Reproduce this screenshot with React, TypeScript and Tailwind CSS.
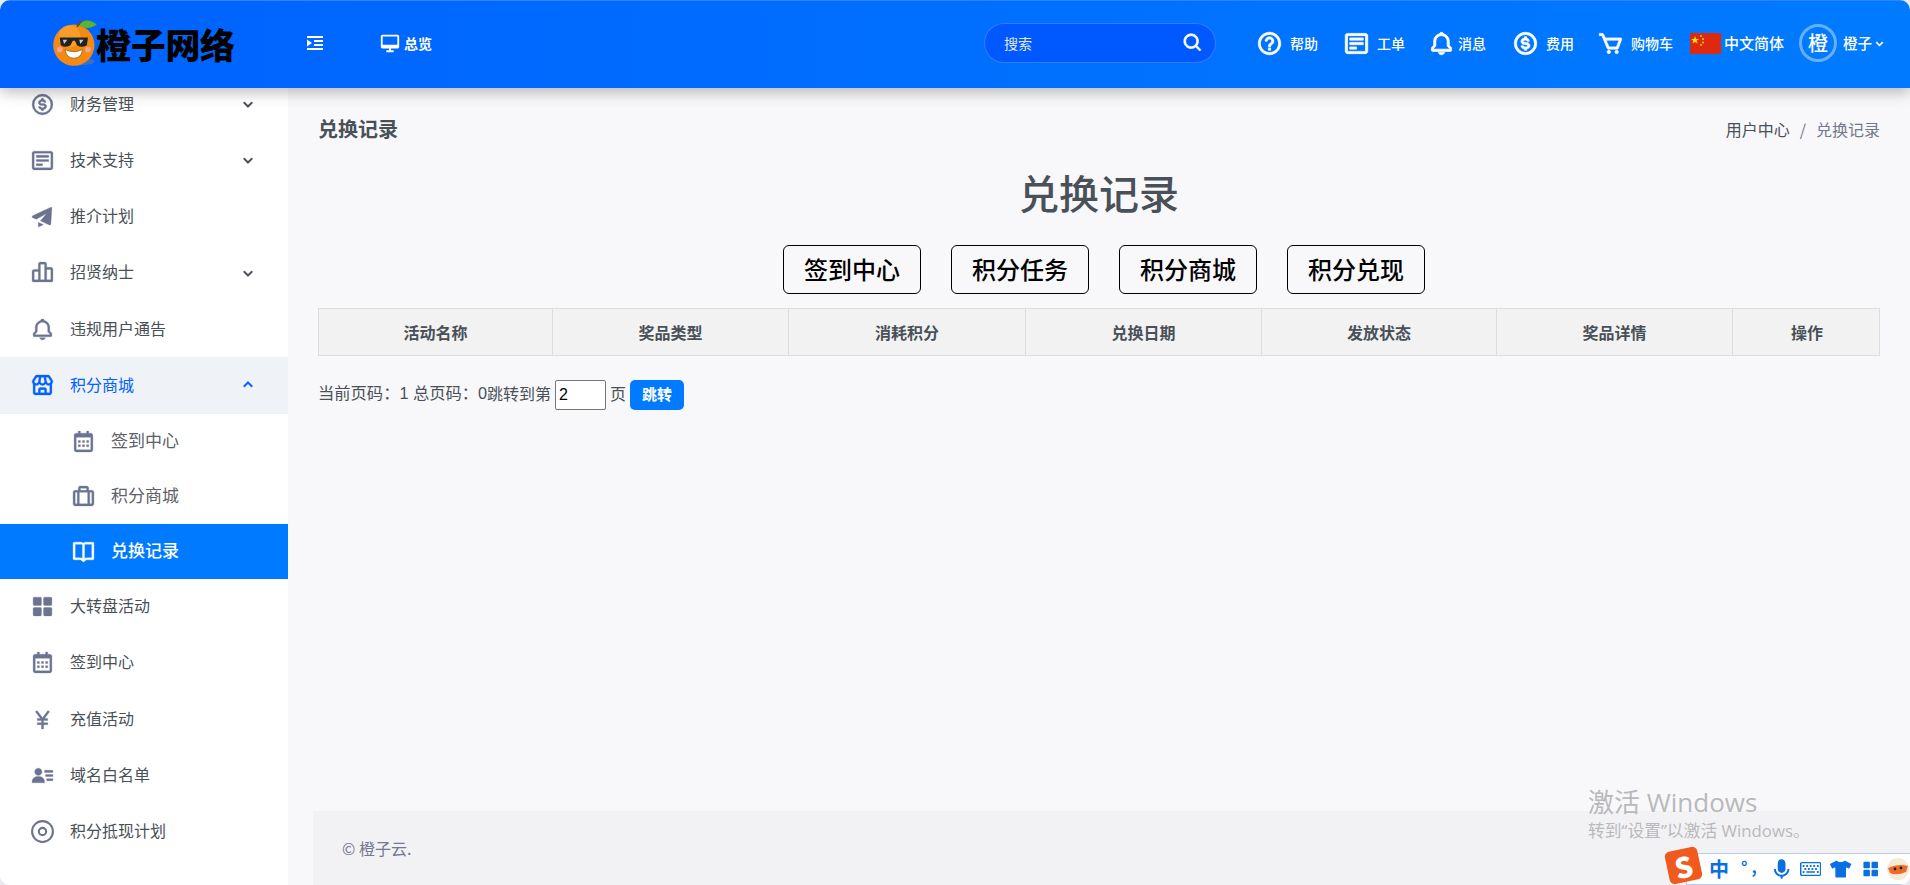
import React from "react";
import {
  BiDollarCircle, BiDetail, BiSolidPaperPlane, BiBarChartAlt2, BiBell, BiStore, BiCalendar, BiBriefcaseAlt,
  BiBookOpen, BiSolidGridAlt, BiYen, BiSolidUserDetail, BiChevronDown, BiChevronUp,
  BiDesktop, BiSearch, BiHelpCircle, BiCart, BiSolidMicrophone,
} from "react-icons/bi";
import { FaTshirt, FaRegKeyboard } from "react-icons/fa";

type IconT = React.ComponentType<{ className?: string }>;
type Row = { label: string; icon: IconT; chev?: "down" | "up"; active?: boolean };

function Ring({ className }: { className?: string }) {
  return (
    <svg viewBox="0 0 24 24" fill="none" stroke="currentColor" className={className}>
      <circle cx="12" cy="12" r="10" strokeWidth="2" />
      <circle cx="12" cy="12" r="3.5" strokeWidth="2" />
    </svg>
  );
}

const before: Row[] = [
  { label: "财务管理", icon: BiDollarCircle, chev: "down" },
  { label: "技术支持", icon: BiDetail, chev: "down" },
  { label: "推介计划", icon: BiSolidPaperPlane },
  { label: "招贤纳士", icon: BiBarChartAlt2, chev: "down" },
  { label: "违规用户通告", icon: BiBell },
  { label: "积分商城", icon: BiStore, chev: "up", active: true },
];
const subs: Row[] = [
  { label: "签到中心", icon: BiCalendar },
  { label: "积分商城", icon: BiBriefcaseAlt },
  { label: "兑换记录", icon: BiBookOpen, active: true },
];
const after: Row[] = [
  { label: "大转盘活动", icon: BiSolidGridAlt },
  { label: "签到中心", icon: BiCalendar },
  { label: "充值活动", icon: BiYen },
  { label: "域名白名单", icon: BiSolidUserDetail },
  { label: "积分抵现计划", icon: Ring },
];
const cols = ["活动名称", "奖品类型", "消耗积分", "兑换日期", "发放状态", "奖品详情", "操作"];
const tabs = ["签到中心", "积分任务", "积分商城", "积分兑现"];

function MainRow({ r }: { r: Row }) {
  const I = r.icon;
  return (
    <div className={`flex h-[56.25px] items-center pl-[30px] pr-[30px] ${r.active ? "bg-[#eff2f7] text-[#0062ff]" : "text-[#495057]"}`}>
      <I className={`h-[25px] w-[25px] [stroke-width:0.3px] ${r.active ? "text-[#0062ff]" : "text-[#6b7390]"}`} />
      <span className="ml-[15px] flex-1 pb-[3px] text-[16px]">{r.label}</span>
      {r.chev === "down" && <BiChevronDown className="h-[20px] w-[20px] [stroke-width:0.4px]" />}
      {r.chev === "up" && <BiChevronUp className="h-[20px] w-[20px] [stroke-width:0.4px]" />}
    </div>
  );
}

function SubRow({ r }: { r: Row }) {
  const I = r.icon;
  return (
    <div className={`flex h-[55px] items-center pl-[71px] ${r.active ? "bg-[#007bff] font-medium text-white" : "text-[#5c6166]"}`}>
      <I className={`h-[25px] w-[25px] [stroke-width:0.3px] ${r.active ? "text-white" : "text-[#6b7390]"}`} />
      <span className="ml-[15px] pb-[2px] text-[17px]">{r.label}</span>
    </div>
  );
}

function Orange() {
  return (
    <svg width="50" height="50" viewBox="0 0 46 46" className="shrink-0">
      <ellipse cx="26" cy="40" rx="14" ry="3.5" fill="#3f6fc4" />
      <circle cx="21" cy="25" r="19" fill="#f58a12" />
      <circle cx="17" cy="17" r="10" fill="#fa9c2a" />
      <path d="M26 7 C29 1 36 1 42 6 C37 10 31 10 26 7Z" fill="#58b52e" />
      <path d="M24 8 L28 2" stroke="#7b4a12" strokeWidth="1.5" />
      <path d="M8 18 H34 L33 25 Q28 28 24 25 L22 21 H20 L18 25 Q13 28 9 25Z" fill="#222" />
      <path d="M11 20 L15 20 L12 24Z M26 20 L30 20 L27 24Z" fill="#ccc" />
      <circle cx="8" cy="29" r="2.6" fill="#f7a3a0" />
      <circle cx="34" cy="29" r="2.6" fill="#f7a3a0" />
      <path d="M13 29 Q21 33 29 29 Q28 37 21 37 Q14 37 13 29Z" fill="#fff" stroke="#7b4a12" strokeWidth="0.6" />
    </svg>
  );
}

function Indent() {
  return (
    <svg width="18" height="18" viewBox="0 0 18 18" fill="#fff">
      <rect x="1" y="2" width="16" height="2" />
      <rect x="8" y="6" width="9" height="2" />
      <rect x="8" y="10" width="9" height="2" />
      <rect x="1" y="14" width="16" height="2" />
      <path d="M1 5.5 L6 9 L1 12.5Z" />
    </svg>
  );
}

function Flag() {
  return (
    <svg width="31" height="21" viewBox="0 0 31 21" className="shrink-0">
      <rect width="31" height="21" fill="#de2910" />
      <path d="M5 3 L6 6 L9 6 L6.7 7.8 L7.6 10.6 L5 9 L2.4 10.6 L3.3 7.8 L1 6 L4 6Z" fill="#ffde00" />
      <circle cx="11" cy="3" r="0.9" fill="#ffde00" />
      <circle cx="13" cy="6" r="0.9" fill="#ffde00" />
      <circle cx="13" cy="9.5" r="0.9" fill="#ffde00" />
      <circle cx="11" cy="12" r="0.9" fill="#ffde00" />
    </svg>
  );
}

function Tool({ icon: I, label, w, gap = "ml-[7px]" }: { icon: IconT; label: string; w: string; gap?: string }) {
  return (
    <div className={`flex items-center ${w}`}>
      <I className="h-[27px] w-[27px] shrink-0 text-white [stroke-width:0.6px]" />
      <span className={`${gap} whitespace-nowrap text-[14px] font-medium`}>{label}</span>
    </div>
  );
}

export default function App() {
  return (
    <div className="h-[885px] w-[1910px] overflow-hidden bg-[#e9e9ee]" style={{ fontFamily: '"Noto Sans CJK SC", "Liberation Sans", sans-serif' }}>
      <div className="relative flex h-full w-full flex-col overflow-hidden rounded-[10px] bg-[#f8f8fb]">
        <header className="relative z-10 flex h-[88px] shrink-0 items-center border-t border-[#2b86ff] bg-gradient-to-r from-[#0062ff] to-[#007bff] pb-[3px] text-white shadow-[0_4px_14px_rgba(0,0,0,0.28)]">
          <div className="ml-[51px] flex w-[255px] items-center">
            <Orange />
            <span className="-ml-[5px] text-[35px] leading-none font-black tracking-[-0.3px] whitespace-nowrap text-black">橙子网络</span>
          </div>
          <Indent />
          <div className="ml-[55px] flex items-center">
            <BiDesktop className="h-[22px] w-[22px]" />
            <span className="ml-[3px] text-[14px] font-bold">总览</span>
          </div>
          <div className="ml-[552px] flex h-[40px] w-[232px] items-center justify-between rounded-full border border-white/20 bg-[#0059ff] pr-[11px] pl-[19px]">
            <span className="text-[14px] text-[#e3e6ec]">搜索</span>
            <BiSearch className="h-[22px] w-[22px] [stroke-width:0.8px]" />
          </div>
          <div className="ml-[40px] flex items-center">
            <Tool icon={BiHelpCircle} label="帮助" w="w-[87px]" />
            <Tool icon={BiDetail} label="工单" w="w-[85px]" />
            <Tool icon={BiBell} label="消息" w="w-[84px]" gap="ml-[3px]" />
            <Tool icon={BiDollarCircle} label="费用" w="w-[85px]" />
            <Tool icon={BiCart} label="购物车" w="w-[93px]" />
            <Flag />
            <span className="ml-[3px] text-[15px] font-medium whitespace-nowrap">中文简体</span>
            <div className="ml-[15px] flex h-[38px] w-[38px] items-center justify-center rounded-full border-[3px] border-white/40 text-[20px] font-medium">橙</div>
            <span className="ml-[6px] text-[14.5px] font-medium">橙子</span>
            <BiChevronDown className="h-[15px] w-[15px] [stroke-width:0.8px]" />
          </div>
        </header>

        <div className="flex min-h-0 flex-1">
          <aside className="w-[288px] shrink-0 overflow-hidden bg-white">
            <div className="-mt-[12px]">
              {before.map((r) => <MainRow key={r.label} r={r} />)}
              {subs.map((r) => <SubRow key={r.label} r={r} />)}
              {after.map((r) => <MainRow key={r.label} r={r} />)}
            </div>
          </aside>

          <main className="flex min-w-0 flex-1 flex-col">
            <div className="flex-1 px-[30px] pt-[28px] text-[#495057]">
              <div className="flex items-center justify-between">
                <h4 className="text-[20px] leading-[26px] font-bold">兑换记录</h4>
                <div className="flex items-center text-[16px] leading-[26px]">
                  <span>用户中心</span>
                  <span className="mx-[10px] text-[#74788d]">/</span>
                  <span className="text-[#74788d]">兑换记录</span>
                </div>
              </div>
              <h1 className="mt-[24px] text-center text-[40px] leading-[52px] font-medium">兑换记录</h1>
              <div className="mt-[27px] flex justify-center gap-[30px] pl-[10px]">
                {tabs.map((t) => (
                  <button key={t} className="h-[49px] w-[138px] rounded-[6px] border border-black pb-[2px] text-[24px] font-medium text-black">{t}</button>
                ))}
              </div>
              <div className="mt-[14px] grid h-[48px] grid-cols-[234px_236px_237px_236px_235px_236px_148px] border border-[#dddddd] bg-[#f2f2f2]">
                {cols.map((c, i) => (
                  <div key={c} className={`flex items-center justify-center text-[16px] font-bold ${i < 6 ? "border-r border-[#dddddd]" : ""}`}>{c}</div>
                ))}
              </div>
              <div className="mt-[24px] flex items-center text-[16px]" style={{ fontFamily: '"Liberation Sans", "Noto Sans CJK SC", sans-serif' }}>
                <span className="-mt-[4px] w-[169px] text-[16.3px] whitespace-nowrap">当前页码：1 总页码：0</span>
                <span>跳转到第</span>
                <input defaultValue="2" className="mx-[4px] h-[30px] w-[51px] rounded-[2px] border border-[#767676] bg-white px-[3px] text-[16px] text-black" />
                <span>页</span>
                <button className="ml-[4px] h-[30px] w-[54px] rounded-[5px] bg-[#007bff] text-[15px] font-bold text-white">跳转</button>
              </div>
            </div>
            <footer className="ml-[25px] flex h-[74px] shrink-0 items-center bg-[#f2f2f5] pl-[29px] text-[16px] text-[#74788d]">© 橙子云.</footer>
          </main>
        </div>

        <div className="pointer-events-none absolute top-[785px] left-[1588px] text-[#b9b9bc]" style={{ fontFamily: '"Open Sans", "Noto Sans CJK SC", sans-serif' }}>
          <div className="text-[26px] leading-[34px]">激活 Windows</div>
          <div className="text-[16.8px] leading-[24px]">转到“设置”以激活 Windows。</div>
        </div>

        <div className="absolute right-0 bottom-0 flex h-[32px] w-[224px] items-center border-y border-l border-[#b9cde8] bg-white pl-[22px] text-[#0a6fe0]">
          <span className="text-[20px] leading-none font-bold">中</span>
          <span className="ml-[12px] pb-[6px] text-[16px] leading-none font-bold tracking-[4px]">°,</span>
          <BiSolidMicrophone className="ml-[9px] h-[24px] w-[24px]" />
          <FaRegKeyboard className="ml-[7px] h-[22px] w-[22px]" />
          <FaTshirt className="ml-[9px] h-[20px] w-[22px]" />
          <BiSolidGridAlt className="ml-[9px] h-[20px] w-[20px]" />
          <svg width="24" height="24" viewBox="0 0 24 24" className="ml-[6px] shrink-0">
            <circle cx="12" cy="12" r="11" fill="#f6ead9" />
            <path d="M2 11 Q12 6 22 9 L20 15 Q10 19 4 16Z" fill="#ef6a28" />
            <circle cx="9" cy="12" r="1.4" fill="#222" />
            <circle cx="15" cy="11" r="1.4" fill="#222" />
          </svg>
        </div>
        <div className="absolute right-[210px] bottom-[3px] flex h-[33px] w-[33px] -rotate-12 items-center justify-center rounded-[5px] bg-[#f2591c] text-[28px] leading-none font-black text-white">S</div>
      </div>
    </div>
  );
}
